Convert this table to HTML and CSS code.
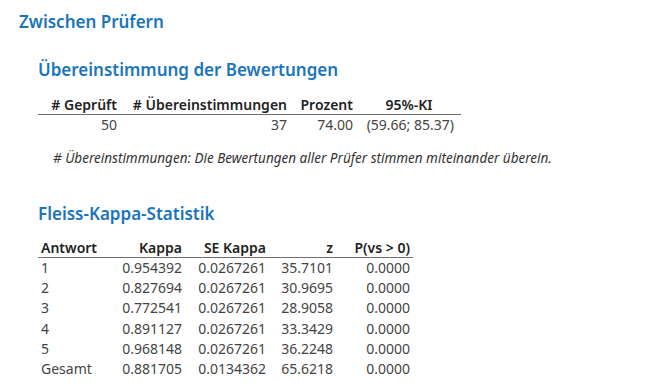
FILE: index.html
```html
<!DOCTYPE html>
<html lang="de">
<head>
<meta charset="utf-8">
<link rel="stylesheet" href="styles.css">
</head>
<body>
<div class="page">
  <h1 class="title">Zwischen Prüfern</h1>
  <section class="section sec-agree">
    <h2 class="subtitle">Übereinstimmung der Bewertungen</h2>
    <table class="tbl tbl-agree">
      <colgroup><col class="a1"><col class="a2"><col class="a3"><col class="a4"></colgroup>
      <thead>
        <tr><th class="r">#&nbsp;Geprüft</th><th class="r">#&nbsp;Übereinstimmungen</th><th class="r">Prozent</th><th class="c">95%-KI</th></tr>
      </thead>
      <tbody>
        <tr><td class="r">50</td><td class="r">37</td><td class="r">74.00</td><td class="r ki">(59.66; 85.37)</td></tr>
      </tbody>
    </table>
    <p class="note"># Übereinstimmungen: Die Bewertungen aller Prüfer stimmen miteinander überein.</p>
  </section>
  <section class="section sec-kappa">
    <h2 class="subtitle">Fleiss-Kappa-Statistik</h2>
    <table class="tbl tbl-kappa">
      <colgroup><col class="k1"><col class="k2"><col class="k3"><col class="k4"><col class="k5"></colgroup>
      <thead>
        <tr><th class="l">Antwort</th><th class="r">Kappa</th><th class="r">SE Kappa</th><th class="r">z</th><th class="r">P(vs &gt; 0)</th></tr>
      </thead>
      <tbody>
        <tr><td class="l">1</td><td class="r">0.954392</td><td class="r">0.0267261</td><td class="r">35.7101</td><td class="r">0.0000</td></tr>
        <tr><td class="l">2</td><td class="r">0.827694</td><td class="r">0.0267261</td><td class="r">30.9695</td><td class="r">0.0000</td></tr>
        <tr><td class="l">3</td><td class="r">0.772541</td><td class="r">0.0267261</td><td class="r">28.9058</td><td class="r">0.0000</td></tr>
        <tr><td class="l">4</td><td class="r">0.891127</td><td class="r">0.0267261</td><td class="r">33.3429</td><td class="r">0.0000</td></tr>
        <tr><td class="l">5</td><td class="r">0.968148</td><td class="r">0.0267261</td><td class="r">36.2248</td><td class="r">0.0000</td></tr>
        <tr><td class="l">Gesamt</td><td class="r">0.881705</td><td class="r">0.0134362</td><td class="r">65.6218</td><td class="r">0.0000</td></tr>
      </tbody>
    </table>
  </section>
</div>
</body>
</html>
```

FILE: styles.css
```css
html, body {
  margin: 0;
  padding: 0;
  background: #ffffff;
}
body {
  font-family: "Noto Sans", "Open Sans", "Liberation Sans", sans-serif;
  color: #333333;
}
.page {
  padding: 10px 0 0 19px;
}
.title,
.subtitle {
  margin: 0;
  font-size: 17px;
  font-weight: 600;
  line-height: 24px;
  color: #1a75bb;
}
.section {
  padding-left: 19px;
}
.sec-agree .subtitle {
  margin-top: 24px;
}
.sec-kappa .subtitle {
  margin-top: 35px;
}
.tbl {
  border-collapse: collapse;
  table-layout: fixed;
  font-size: 14px;
  margin-top: 13px;
}
.sec-kappa .tbl {
  margin-top: 12px;
}
.tbl th {
  font-weight: 600;
  color: #222;
  border-bottom: 1px solid #6e6e6e;
  padding: 0 4px;
  line-height: 19px;
  white-space: nowrap;
}
.tbl td {
  padding: 0 4px;
  line-height: 20.2px;
  color: #444;
  white-space: nowrap;
}
.tbl-agree { width: 423px; }
.tbl-agree td { line-height: 20px; }
.tbl-agree .a1 { width: 83px; }
.tbl-agree .a2 { width: 170px; }
.tbl-agree .a3 { width: 66px; }
.tbl-agree .a4 { width: 104px; }
.tbl-agree .ki { padding-right: 7px; }

.tbl-kappa { width: 375px; }
.tbl-kappa .k1 { width: 72px; }
.tbl-kappa .k2 { width: 75px; }
.tbl-kappa .k3 { width: 84px; }
.tbl-kappa .k4 { width: 67px; }
.tbl-kappa .k5 { width: 77px; }
.tbl-kappa th, .tbl-kappa td { padding: 0 3px; }

.r { text-align: right; }
.l { text-align: left; }
.c { text-align: center; }
.note {
  margin: 14px 0 0 15px;
  font-size: 13.5px;
  line-height: 18px;
  font-style: italic;
  color: #333;
}
```
